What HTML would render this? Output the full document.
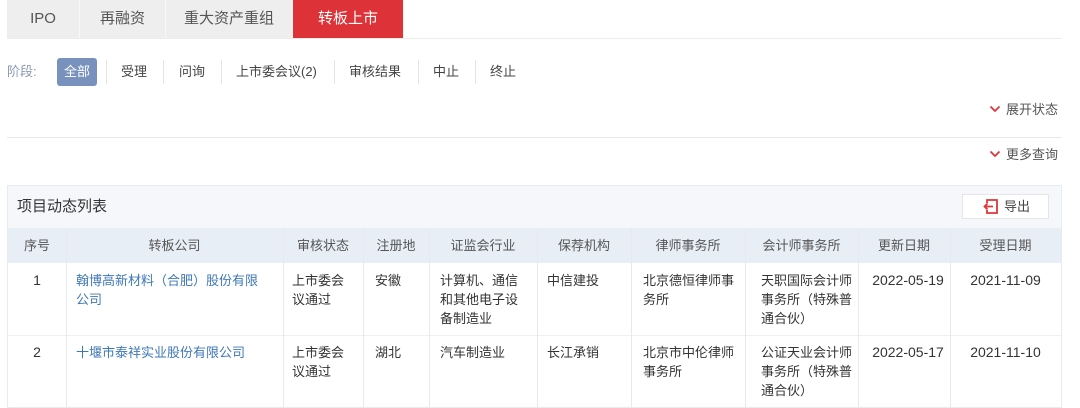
<!DOCTYPE html>
<html><head><meta charset="utf-8"><style>
*{margin:0;padding:0;box-sizing:border-box}
body{width:1080px;height:408px;background:#fff;font-family:"Liberation Sans","Noto Sans CJK SC",sans-serif;font-size:13px;color:#333;position:relative;overflow:hidden}
.a{position:absolute}
.tab{position:absolute;top:0;height:38px;line-height:38px;text-align:center;font-size:15px;color:#555;background:#eeeeee;border-right:1px solid #f8f8f8}
.st{position:absolute;top:62px;line-height:20px;font-size:13px;color:#444}
.sep{position:absolute;top:60px;width:1px;height:24px;background:#e5e5e5}
.cell{position:absolute;padding:0 10px;line-height:19px;font-size:13px;color:#333}
.vl{position:absolute;width:1px;background:#e6eaf0}
.h{position:absolute;top:228px;height:35px;line-height:35px;text-align:center;color:#555;font-size:13px}
.lk{color:#3f78b8}
.d{font-size:14px}
</style></head><body>
<div class="tab" style="left:7px;width:73px">IPO</div>
<div class="tab" style="left:80px;width:86px">再融资</div>
<div class="tab" style="left:166px;width:127px">重大资产重组</div>
<div class="tab" style="left:293px;width:111px;background:#dd3238;color:#fff">转板上市</div>
<div class="a" style="left:7px;top:38px;width:1055px;height:1px;background:#ececec"></div>

<div class="st" style="left:7px;color:#8a9bb5">阶段:</div>
<div class="a" style="left:57px;top:58px;width:40px;height:28px;background:#7992bd;border-radius:3px;color:#fff;line-height:28px;text-align:center;font-size:13px">全部</div>
<div class="sep" style="left:106px"></div>
<div class="st" style="left:121px">受理</div>
<div class="sep" style="left:163px"></div>
<div class="st" style="left:179px">问询</div>
<div class="sep" style="left:221px"></div>
<div class="st" style="left:236px">上市委会议(2)</div>
<div class="sep" style="left:334px"></div>
<div class="st" style="left:349px">审核结果</div>
<div class="sep" style="left:418px"></div>
<div class="st" style="left:433px">中止</div>
<div class="sep" style="left:475px"></div>
<div class="st" style="left:490px">终止</div>

<svg class="a" style="left:989px;top:104px" width="12" height="10"><path d="M1.5 2.5L6 7L10.5 2.5" stroke="#e0353b" stroke-width="1.8" fill="none"/></svg>
<div class="a" style="left:1006px;top:100px;line-height:19px;color:#555">展开状态</div>
<div class="a" style="left:7px;top:137px;width:1055px;height:1px;background:#e3e9f3"></div>
<svg class="a" style="left:989px;top:149px" width="12" height="10"><path d="M1.5 2.5L6 7L10.5 2.5" stroke="#e0353b" stroke-width="1.8" fill="none"/></svg>
<div class="a" style="left:1006px;top:145px;line-height:19px;color:#555">更多查询</div>

<div class="a" style="left:7px;top:185px;width:1055px;height:223px;border:1px solid #e8ecf1;background:#fff"></div>
<div class="a" style="left:8px;top:186px;width:1053px;height:42px;background:#f5f7fa"></div>
<div class="a" style="left:17px;top:197px;font-size:15px;color:#333;line-height:20px">项目动态列表</div>
<div class="a" style="left:962px;top:194px;width:87px;height:25px;background:#fff;border:1px solid #e6e6e6"></div>
<svg class="a" style="left:983px;top:198px" width="16" height="17"><path d="M4 5V2H14V15H4V12" stroke="#e0353b" stroke-width="1.8" fill="none"/><path d="M10 8.5H1.5M4.5 5.5L1.5 8.5L4.5 11.5" stroke="#e0353b" stroke-width="1.8" fill="none"/></svg>
<div class="a" style="left:1004px;top:197px;line-height:19px;color:#444">导出</div>

<div class="a" style="left:8px;top:228px;width:1053px;height:35px;background:#e8eef5"></div>
<div class="a" style="left:8px;top:335px;width:1053px;height:1px;background:#eef0f3"></div>
<div class="vl" style="left:66px;top:228px;height:179px"></div>
<div class="vl" style="left:283px;top:228px;height:179px"></div>
<div class="vl" style="left:363px;top:228px;height:179px"></div>
<div class="vl" style="left:429px;top:228px;height:179px"></div>
<div class="vl" style="left:537px;top:228px;height:179px"></div>
<div class="vl" style="left:631px;top:228px;height:179px"></div>
<div class="vl" style="left:745px;top:228px;height:179px"></div>
<div class="vl" style="left:858px;top:228px;height:179px"></div>
<div class="vl" style="left:950px;top:228px;height:179px"></div>

<div class="h" style="left:8px;width:58px">序号</div>
<div class="h" style="left:66px;width:217px">转板公司</div>
<div class="h" style="left:283px;width:80px">审核状态</div>
<div class="h" style="left:363px;width:66px">注册地</div>
<div class="h" style="left:429px;width:108px">证监会行业</div>
<div class="h" style="left:537px;width:94px">保荐机构</div>
<div class="h" style="left:631px;width:114px">律师事务所</div>
<div class="h" style="left:745px;width:113px">会计师事务所</div>
<div class="h" style="left:858px;width:92px">更新日期</div>
<div class="h" style="left:950px;width:111px">受理日期</div>

<div class="cell d" style="left:8px;top:271px;width:58px;text-align:center">1</div>
<div class="cell lk" style="left:66px;top:271px;width:212px">翰博高新材料（合肥）股份有限公司</div>
<div class="cell" style="left:282px;top:271px;width:82px">上市委会议通过</div>
<div class="cell" style="left:365px;top:271px;width:66px">安徽</div>
<div class="cell" style="left:430px;top:271px;width:108px">计算机、通信和其他电子设备制造业</div>
<div class="cell" style="left:537px;top:271px;width:94px">中信建投</div>
<div class="cell" style="left:633px;top:271px;width:114px">北京德恒律师事务所</div>
<div class="cell" style="left:751px;top:271px;width:114px">天职国际会计师事务所（特殊普通合伙）</div>
<div class="cell d" style="left:858px;top:271px;width:100px;text-align:center;padding:0">2022-05-19</div>
<div class="cell d" style="left:950px;top:271px;width:111px;text-align:center;padding:0">2021-11-09</div>

<div class="cell d" style="left:8px;top:343px;width:58px;text-align:center">2</div>
<div class="cell lk" style="left:66px;top:343px;width:212px">十堰市泰祥实业股份有限公司</div>
<div class="cell" style="left:282px;top:343px;width:82px">上市委会议通过</div>
<div class="cell" style="left:365px;top:343px;width:66px">湖北</div>
<div class="cell" style="left:430px;top:343px;width:108px">汽车制造业</div>
<div class="cell" style="left:537px;top:343px;width:94px">长江承销</div>
<div class="cell" style="left:633px;top:343px;width:114px">北京市中伦律师事务所</div>
<div class="cell" style="left:751px;top:343px;width:114px">公证天业会计师事务所（特殊普通合伙）</div>
<div class="cell d" style="left:858px;top:343px;width:100px;text-align:center;padding:0">2022-05-17</div>
<div class="cell d" style="left:950px;top:343px;width:111px;text-align:center;padding:0">2021-11-10</div>
</body></html>
